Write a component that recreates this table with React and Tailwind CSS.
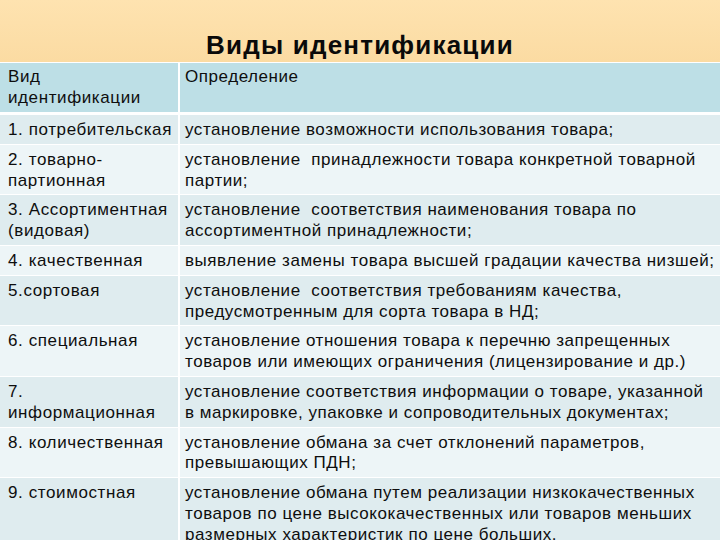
import React from "react";

const rows = [
  ["1. потребительская", ["установление возможности использования товара;"]],
  ["2. товарно-\nпартионная", ["установление  принадлежности товара конкретной товарной", "партии;"]],
  ["3. Ассортиментная\n(видовая)", ["установление  соответствия наименования товара по", "ассортиментной принадлежности;"]],
  ["4. качественная", ["выявление замены товара высшей градации качества низшей;"]],
  ["5.сортовая", ["установление  соответствия требованиям качества,", "предусмотренным для сорта товара в НД;"]],
  ["6. специальная", ["установление отношения товара к перечню запрещенных", "товаров или имеющих ограничения (лицензирование и др.)"]],
  ["7.\nинформационная", ["установление соответствия информации о товаре, указанной", "в маркировке, упаковке и сопроводительных документах;"]],
  ["8. количественная", ["установление обмана за счет отклонений параметров,", "превышающих ПДН;"]],
  ["9. стоимостная", ["установление обмана путем реализации низкокачественных", "товаров по цене высококачественных или товаров меньших", "размерных характеристик по цене больших."]],
];

export default function App() {
  return (
    <div
      className="w-[720px] h-[540px] overflow-hidden bg-white text-[#0e0e0e]"
      style={{ fontFamily: '"Liberation Sans", Arial, sans-serif' }}
    >
      <div className="h-[62px] bg-gradient-to-b from-[#fee3b0] to-[#fbdba2] flex justify-center pt-[30px]">
        <h1 className="text-[26px] leading-[30px] font-bold tracking-[1.2px] text-[#0a0a0a]">Виды идентификации</h1>
      </div>
      <div className="pt-[1px] flex flex-col gap-[1px]">
        <div className="grid grid-cols-[178px_1fr] gap-x-[2px] mb-[2px]">
          <div className="bg-[#bddfe6] h-[49px] pt-[4px] pl-[8px] text-[17px] leading-[20.8px] tracking-[0.6px]">
            Вид<br />идентификации
          </div>
          <div className="bg-[#bddfe6] h-[49px] pt-[4px] pl-[5px] text-[17px] leading-[20.8px] tracking-[0.55px]">
            Определение
          </div>
        </div>
        {rows.map(([left, right], i) => {
          const bg = i % 2 === 0 ? "bg-[#dfecef]" : "bg-[#edf5f7]";
          return (
            <div key={i} className="grid grid-cols-[178px_1fr] gap-x-[2px]">
              <div className={`${bg} pt-[5px] pb-[3px] pl-[8px] text-[17px] leading-[20.8px] tracking-[0.6px] whitespace-pre-line`}>
                {left}
              </div>
              <div className={`${bg} pt-[5px] pb-[3px] pl-[5px] text-[17px] leading-[20.8px] tracking-[0.55px] whitespace-pre`}>
                {right.map((l, j) => (
                  <div key={j}>{l}</div>
                ))}
              </div>
            </div>
          );
        })}
      </div>
    </div>
  );
}
